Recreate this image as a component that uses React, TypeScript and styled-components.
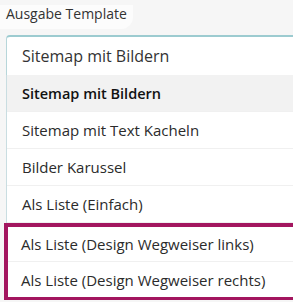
import React from 'react'
import styled, { createGlobalStyle } from 'styled-components'

const GlobalStyle = createGlobalStyle`
  html, body {
    margin: 0;
    padding: 0;
    background: #f6f6f6;
    overflow: hidden;
    font-family: 'Open Sans', 'Liberation Sans', sans-serif;
    color: #2b2b2b;
  }
`

const Field = styled.div`
  display: flex;
  flex-direction: column;
  padding: 5px 0 0 6px;
`

const Label = styled.div`
  align-self: flex-start;
  font-size: 14px;
  line-height: 18px;
  margin-left: -6px;
  padding: 0 6px 6px 6px;
  background: #fcfcfc;
  border-radius: 0 0 12px 0;
  color: #333;
`

const SelectBox = styled.div`
  margin-top: 6px;
  display: flex;
  align-items: center;
  height: 38px;
  padding-left: 15px;
  background: #fff;
  border-top: 2px solid #9ccbd0;
  border-left: 1px solid #b7d6da;
  border-radius: 4px 0 0 0;
  font-size: 16px;
  color: #333;
`

const Menu = styled.ul`
  list-style: none;
  margin: 0;
  padding: 0;
  background: #fff;
  border-left: 1px solid #c9dde1;
`

const Option = styled.li<{ selected?: boolean }>`
  display: flex;
  align-items: center;
  height: 37px;
  padding-left: 15px;
  font-size: ${(p) => (p.selected ? '14.5px' : '15px')};
  border-bottom: 1px solid #f0f0f0;
  box-sizing: border-box;
  white-space: nowrap;
  background: ${(p) => (p.selected ? '#f2f2f2' : '#fff')};
  font-weight: ${(p) => (p.selected ? 600 : 400)};
  color: ${(p) => (p.selected ? '#111' : '#2b2b2b')};
`

const Highlight = styled.div`
  margin-left: -2px;
  border-top: 4px solid #a3165f;
  border-left: 4px solid #a3165f;
  border-bottom: 3px solid #a3165f;
  background: #fff;

  ${Option} {
    padding-left: 13px;
    height: 35px;
  }
  ${Option}:last-child {
    border-bottom: none;
  }
`

const options = ['Sitemap mit Text Kacheln', 'Bilder Karussel', 'Als Liste (Einfach)']
const highlighted = ['Als Liste (Design Wegweiser links)', 'Als Liste (Design Wegweiser rechts)']

export default function App() {
  return (
    <>
      <GlobalStyle />
      <Field>
        <Label>Ausgabe Template</Label>
        <SelectBox>Sitemap mit Bildern</SelectBox>
        <Menu>
          <Option selected>Sitemap mit Bildern</Option>
          {options.map((o) => (
            <Option key={o}>{o}</Option>
          ))}
        </Menu>
        <Highlight>
          {highlighted.map((o) => (
            <Option key={o}>{o}</Option>
          ))}
        </Highlight>
      </Field>
    </>
  )
}
